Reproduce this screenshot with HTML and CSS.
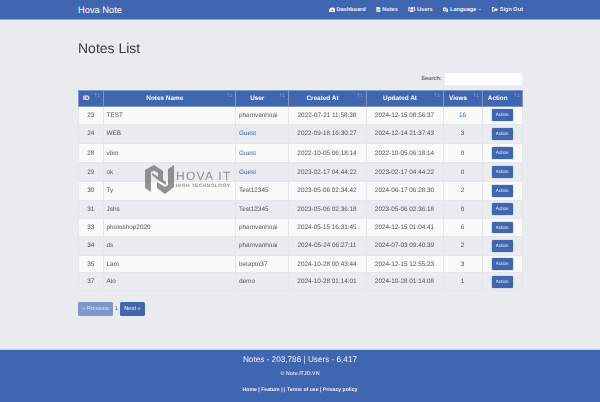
FILE: index.html
```html
<!DOCTYPE html>
<html lang="en">
<head>
<meta charset="utf-8">
<title>Notes List</title>
<link rel="stylesheet" href="styles.css">
</head>
<body>
<div class="page-wrap">
<header class="navbar">
  <div class="brand">Hova Note</div>
  <nav class="menu">
    <a><svg class="ico" viewBox="0 0 14 12"><path d="M7 1a7 7 0 0 0-7 7v3h14V8a7 7 0 0 0-7-7zm0 3 1 3a1.4 1.4 0 1 1-2 0z" fill-rule="evenodd"/></svg>Dashboard</a>
    <a><svg class="ico" viewBox="0 0 12 14"><path d="M1 0h7l3 3v11H1zM3 6v1h6V6zm0 2v1h6V8zm0 2v1h6v-1z" fill-rule="evenodd"/></svg>Notes</a>
    <a><svg class="ico" viewBox="0 0 16 12"><circle cx="8" cy="3" r="3"/><circle cx="2.5" cy="2" r="2"/><circle cx="13.5" cy="2" r="2"/><path d="M4 7h8v5H4zM0 5h3v3H0zM13 5h3v3h-3z"/></svg>Users</a>
    <a><svg class="ico" viewBox="0 0 14 14"><path d="M0 1h8v10H0zM9 4h5v10H6v-2h3z" fill-rule="evenodd"/><path class="cut" d="M2 3h4v1H2zM3 5h3v4H3z"/></svg>Language <span class="caret"></span></a>
    <a><svg class="ico" viewBox="0 0 14 12"><path d="M5 0v2H2v8h3v2H0V0zM8 2l6 4-6 4V8H4V4h4z"/></svg>Sign Out</a>
  </nav>
</header>

<main class="content">
  <h1 class="title">Notes List</h1>
  <div class="search"><label for="q">Search:</label><input id="q" class="search-input" type="text"></div>

  <table class="notes">
    <thead>
      <tr>
        <th class="c-id">ID<span class="sort">↑↓</span></th>
        <th class="c-name">Notes Name<span class="sort">↑↓</span></th>
        <th class="c-user">User<span class="sort">↑↓</span></th>
        <th class="c-date1">Created At<span class="sort">↑↓</span></th>
        <th class="c-date2">Updated At<span class="sort">↑↓</span></th>
        <th class="c-views">Views<span class="sort">↑↓</span></th>
        <th class="c-action">Action<span class="sort">↑↓</span></th>
      </tr>
    </thead>
    <tbody>
      <tr class="odd r18"><td class="mid">23</td><td>TEST</td><td>phamvanhoai</td><td class="mid">2022-07-21 11:58:38</td><td class="mid">2024-12-15 08:56:37</td><td class="mid"><a class="link">16</a></td><td class="mid"><a class="btn">Action</a></td></tr>
      <tr class="even r20"><td class="mid">24</td><td>WEB</td><td><a class="link">Guest</a></td><td class="mid">2022-09-18 16:30:27</td><td class="mid">2024-12-14 21:37:43</td><td class="mid">3</td><td class="mid"><a class="btn">Action</a></td></tr>
      <tr class="odd r19"><td class="mid">28</td><td>vbm</td><td><a class="link">Guest</a></td><td class="mid">2022-10-05 06:18:14</td><td class="mid">2022-10-05 06:18:14</td><td class="mid">0</td><td class="mid"><a class="btn">Action</a></td></tr>
      <tr class="even r20"><td class="mid">29</td><td>ok</td><td><a class="link">Guest</a></td><td class="mid">2023-02-17 04:44:22</td><td class="mid">2023-02-17 04:44:22</td><td class="mid">0</td><td class="mid"><a class="btn">Action</a></td></tr>
      <tr class="odd r18"><td class="mid">30</td><td>Ty</td><td>Test12345</td><td class="mid">2023-05-06 02:34:42</td><td class="mid">2024-06-17 06:28:30</td><td class="mid">2</td><td class="mid"><a class="btn">Action</a></td></tr>
      <tr class="even r18"><td class="mid">31</td><td>Jshs</td><td>Test12345</td><td class="mid">2023-05-06 02:36:18</td><td class="mid">2023-05-06 02:36:18</td><td class="mid">0</td><td class="mid"><a class="btn">Action</a></td></tr>
      <tr class="odd r18"><td class="mid">33</td><td>photoshop2020</td><td>phamvanhoai</td><td class="mid">2024-05-15 16:31:45</td><td class="mid">2024-12-15 01:04:41</td><td class="mid">6</td><td class="mid"><a class="btn">Action</a></td></tr>
      <tr class="even r19"><td class="mid">34</td><td>ds</td><td>phamvanhoai</td><td class="mid">2024-05-24 06:27:11</td><td class="mid">2024-07-03 09:40:39</td><td class="mid">2</td><td class="mid"><a class="btn">Action</a></td></tr>
      <tr class="odd r17"><td class="mid">35</td><td>Lam</td><td>betapto37</td><td class="mid">2024-10-28 00:43:44</td><td class="mid">2024-12-15 12:55:23</td><td class="mid">3</td><td class="mid"><a class="btn">Action</a></td></tr>
      <tr class="even r18"><td class="mid">37</td><td>Alo</td><td>demo</td><td class="mid">2024-10-28 01:14:01</td><td class="mid">2024-10-28 01:14:08</td><td class="mid">1</td><td class="mid"><a class="btn">Action</a></td></tr>
    </tbody>
  </table>

  <div class="pager">
    <a class="page prev">« Previous</a><span class="num">1</span><a class="page next">Next »</a>
  </div>
</main>

<footer class="footer">
  <div class="stats">Notes - 203,786 | Users - 6,417</div>
  <div class="copy">© Note.ITJD.VN</div>
  <div class="links">Home | Feature | | Terms of use | Privacy policy</div>
</footer>

<div class="watermark">
  <svg class="wm-logo" viewBox="0 0 29 29"><path d="M0 5 9 0l9 6v10l-5-3V8L9 5.5 6 7v20l-6-4zM29 0v22l-9 7-8-6v-6l8 5 3-2V4z"/><path d="M7 10l6 5 8 5v-3l-14-9z"/></svg>
  <div class="wm-text">
    <div class="wm-big">HOVA IT</div>
    <div class="wm-small">HIGH TECHNOLOGY</div>
  </div>
</div>
</div>
</body>
</html>
```

FILE: styles.css
```css
* { box-sizing: border-box; }
html, body { margin: 0; height: 402px; overflow: hidden; }
body {
  background: #e9ebef;
  font-family: "Liberation Sans", Arial, sans-serif;
  color: #444;
  text-rendering: geometricPrecision;
}
.page-wrap {
  height: 402px;
  display: flex;
  flex-direction: column;
  position: relative;
  filter: blur(.3px);
}
.navbar {
  height: 20px;
  flex: none;
  background: #4066b0;
  border-bottom: 1px solid #8ba3d2;
  color: #fff;
  display: flex;
  align-items: center;
  justify-content: space-between;
  padding: 0 77px 0 78px;
}
.brand { font-size: 9.3px; }
.menu { display: flex; gap: 10.4px; font-size: 5.6px; font-weight: bold; }
.menu a { display: flex; align-items: center; gap: 1.5px; color: #f2f4fa; }
.ico { height: 5.5px; width: auto; fill: #f2f4fa; }
.ico .cut { fill: #4066b0; }
.caret {
  display: inline-block;
  margin-left: 1.5px;
  border-top: 1.5px solid #f2f4fa;
  border-left: 1.5px solid transparent;
  border-right: 1.5px solid transparent;
}
.content { flex: 1; padding: 0 78px; }
.title {
  margin: 20px 0 0;
  font-size: 14px;
  line-height: 17px;
  font-weight: normal;
  color: #3a3a3a;
}
.search {
  margin-top: 16px;
  height: 12px;
  display: flex;
  justify-content: flex-end;
  align-items: center;
  gap: 3px;
  font-size: 5.7px;
  font-weight: bold;
  color: #666;
}
.search-input {
  width: 77px;
  height: 12px;
  border: 0;
  padding: 0;
  background: #fff;
}
.notes {
  margin-top: 5px;
  width: 444px;
  border-collapse: collapse;
  table-layout: fixed;
  font-size: 6.4px;
}
.c-id { width: 24.5px; }
.c-name { width: 132.5px; }
.c-user { width: 52.5px; }
.c-date1 { width: 78px; }
.c-date2 { width: 77px; }
.c-views { width: 39px; }
.c-action { width: 40.5px; }
.notes th {
  height: 15.5px;
  padding: 0 9px 0 0;
  background: #4066b0;
  border: 1px solid #7f98cb;
  color: #fff;
  font-size: 6.4px;
  font-weight: bold;
  text-align: center;
  position: relative;
}
.sort {
  position: absolute;
  right: 3px;
  top: 2px;
  font-family: "DejaVu Sans", sans-serif;
  font-size: 5px;
  font-weight: normal;
  letter-spacing: -1.2px;
  color: #8fa5d2;
}
.notes td {
  padding: 0 0 0 3px;
  border: 1px solid #e4e6ea;
  color: #555;
}
.notes td.mid { text-align: center; padding: 0; }
.r17 td { height: 17.4px; }
.r18 td { height: 18.2px; }
.r19 td { height: 18.9px; }
.r20 td { height: 19.4px; }
.odd { background: #fafafa; }
.even { background: #e9ebef; }
.link { color: #3f66b5; }
.btn {
  display: inline-block;
  width: 21px;
  height: 11.5px;
  line-height: 11.5px;
  background: #4066b0;
  border-radius: 1px;
  box-shadow: 0 0 0 .6px #c3cee6;
  color: #f0f3fa;
  font-size: 4.6px;
  text-align: center;
  vertical-align: middle;
}
.pager {
  margin-top: 10.5px;
  display: flex;
  align-items: center;
  font-size: 5.7px;
  color: #555;
}
.page {
  height: 14px;
  line-height: 14px;
  border-radius: 1.5px;
  text-align: center;
  color: #fff;
}
.prev { width: 35px; background: #7f98cb; color: #dfe6f4; }
.next { width: 25px; background: #4066b0; }
.num { width: 7px; text-align: center; }
.footer {
  flex: none;
  height: 53px;
  background: #4066b0;
  border-top: 1px solid #c6cddd;
  color: #f0f3fa;
  text-align: center;
}
.stats { margin-top: 4px; font-size: 8.2px; line-height: 11px; }
.copy { margin-top: 6px; font-size: 5.3px; line-height: 7px; font-weight: bold; color: #d5ddef; }
.links { margin-top: 9px; font-size: 5.15px; line-height: 7px; font-weight: bold; }
.watermark {
  position: absolute;
  left: 145px;
  top: 165px;
  display: flex;
  gap: 2px;
  opacity: .75;
  color: #6f6f6f;
}
.wm-logo { width: 29px; height: 29px; fill: #6f6f6f; }
.wm-text { padding-top: 5px; }
.wm-big { font-size: 12px; line-height: 13px; letter-spacing: 1.3px; white-space: nowrap; }
.wm-small { margin-top: 1px; font-size: 4.9px; line-height: 6px; font-weight: bold; letter-spacing: .42px; white-space: nowrap; }
```
